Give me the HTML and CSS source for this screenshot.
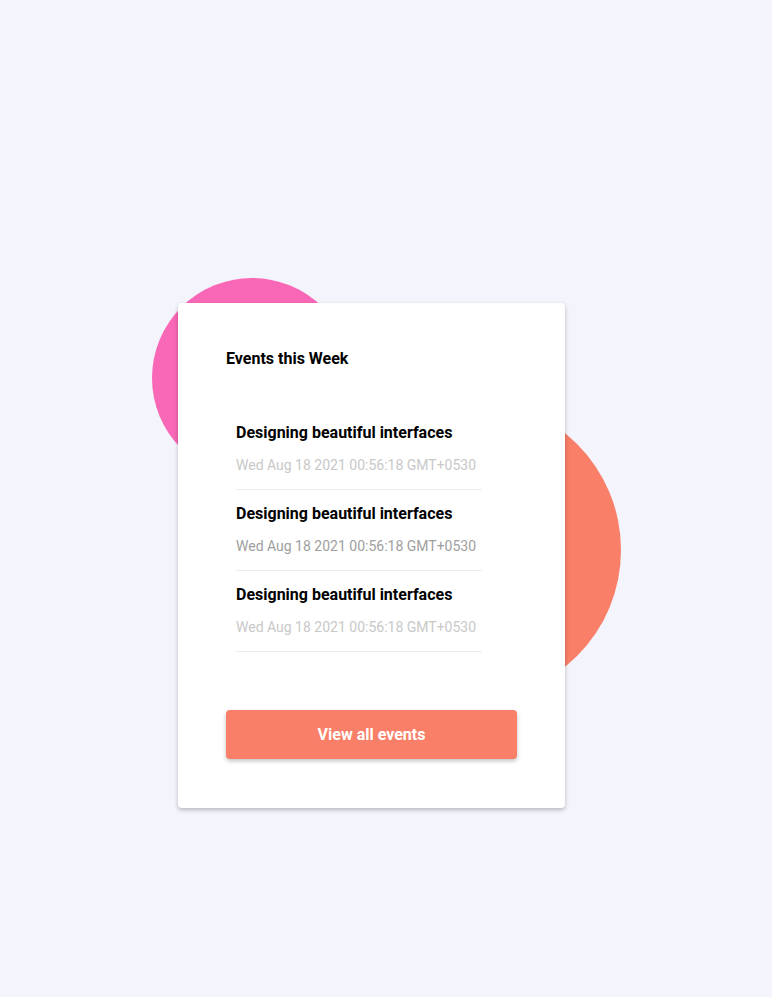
FILE: index.html
```html
<!DOCTYPE html>
<html>
<head>
<meta charset="utf-8">
<link rel="stylesheet" href="styles.css">
</head>
<body>
<div class="page">
  <div class="stage">
    <div class="blob blob-pink"></div>
    <div class="blob blob-salmon"></div>
    <div class="card">
      <h2 class="card-title">Events this Week</h2>
      <ul class="events">
        <li class="event">
          <div class="event-name">Designing beautiful interfaces</div>
          <div class="event-date">Wed Aug 18 2021 00:56:18 GMT+0530</div>
        </li>
        <li class="event">
          <div class="event-name">Designing beautiful interfaces</div>
          <div class="event-date event-date-dark">Wed Aug 18 2021 00:56:18 GMT+0530</div>
        </li>
        <li class="event">
          <div class="event-name">Designing beautiful interfaces</div>
          <div class="event-date">Wed Aug 18 2021 00:56:18 GMT+0530</div>
        </li>
      </ul>
      <button class="btn">View all events</button>
    </div>
  </div>
</div>
</body>
</html>
```
FILE: styles.css
```css
html, body {
  margin: 0;
  padding: 0;
  background: #f4f4fd;
  font-family: Roboto, "Liberation Sans", sans-serif;
}
.page {
  padding: 303px 0 0 178px;
  min-height: 997px;
  box-sizing: border-box;
}
.stage {
  position: relative;
  width: 387px;
}
.blob {
  position: absolute;
  border-radius: 50%;
}
.blob-pink {
  left: -26px;
  top: -25px;
  width: 200px;
  height: 200px;
  background: #f968b6;
}
.blob-salmon {
  left: 143px;
  top: 97px;
  width: 300px;
  height: 300px;
  background: #f97f68;
}
.card {
  position: relative;
  background: #ffffff;
  border-radius: 4px;
  box-shadow: 0 2px 4px rgba(0, 0, 0, 0.25);
  padding: 46px 48px 49px;
  box-sizing: border-box;
  width: 387px;
}
.card-title {
  margin: 0;
  font-size: 16px;
  line-height: 19px;
  font-weight: 700;
  color: #000;
}
.events {
  list-style: none;
  margin: 41px 0 0 10px;
  padding: 0;
  width: 246px;
}
.event {
  padding: 14px 0 16px;
  border-bottom: 1px solid #ebebf2;
}
.event-name {
  font-size: 16px;
  line-height: 19px;
  font-weight: 700;
  color: #000;
}
.event-date {
  margin-top: 15px;
  font-size: 14px;
  line-height: 16px;
  color: #c8c8c8;
}
.event-date-dark {
  color: #9e9e9e;
}
.btn {
  display: block;
  width: 100%;
  height: 49px;
  margin-top: 58px;
  border: none;
  border-radius: 4px;
  background: #f97f68;
  color: #fff;
  font-family: Roboto, "Liberation Sans", sans-serif;
  font-size: 16px;
  font-weight: 700;
  box-shadow: 0 2px 4px rgba(0, 0, 0, 0.25);
  cursor: pointer;
}
```
